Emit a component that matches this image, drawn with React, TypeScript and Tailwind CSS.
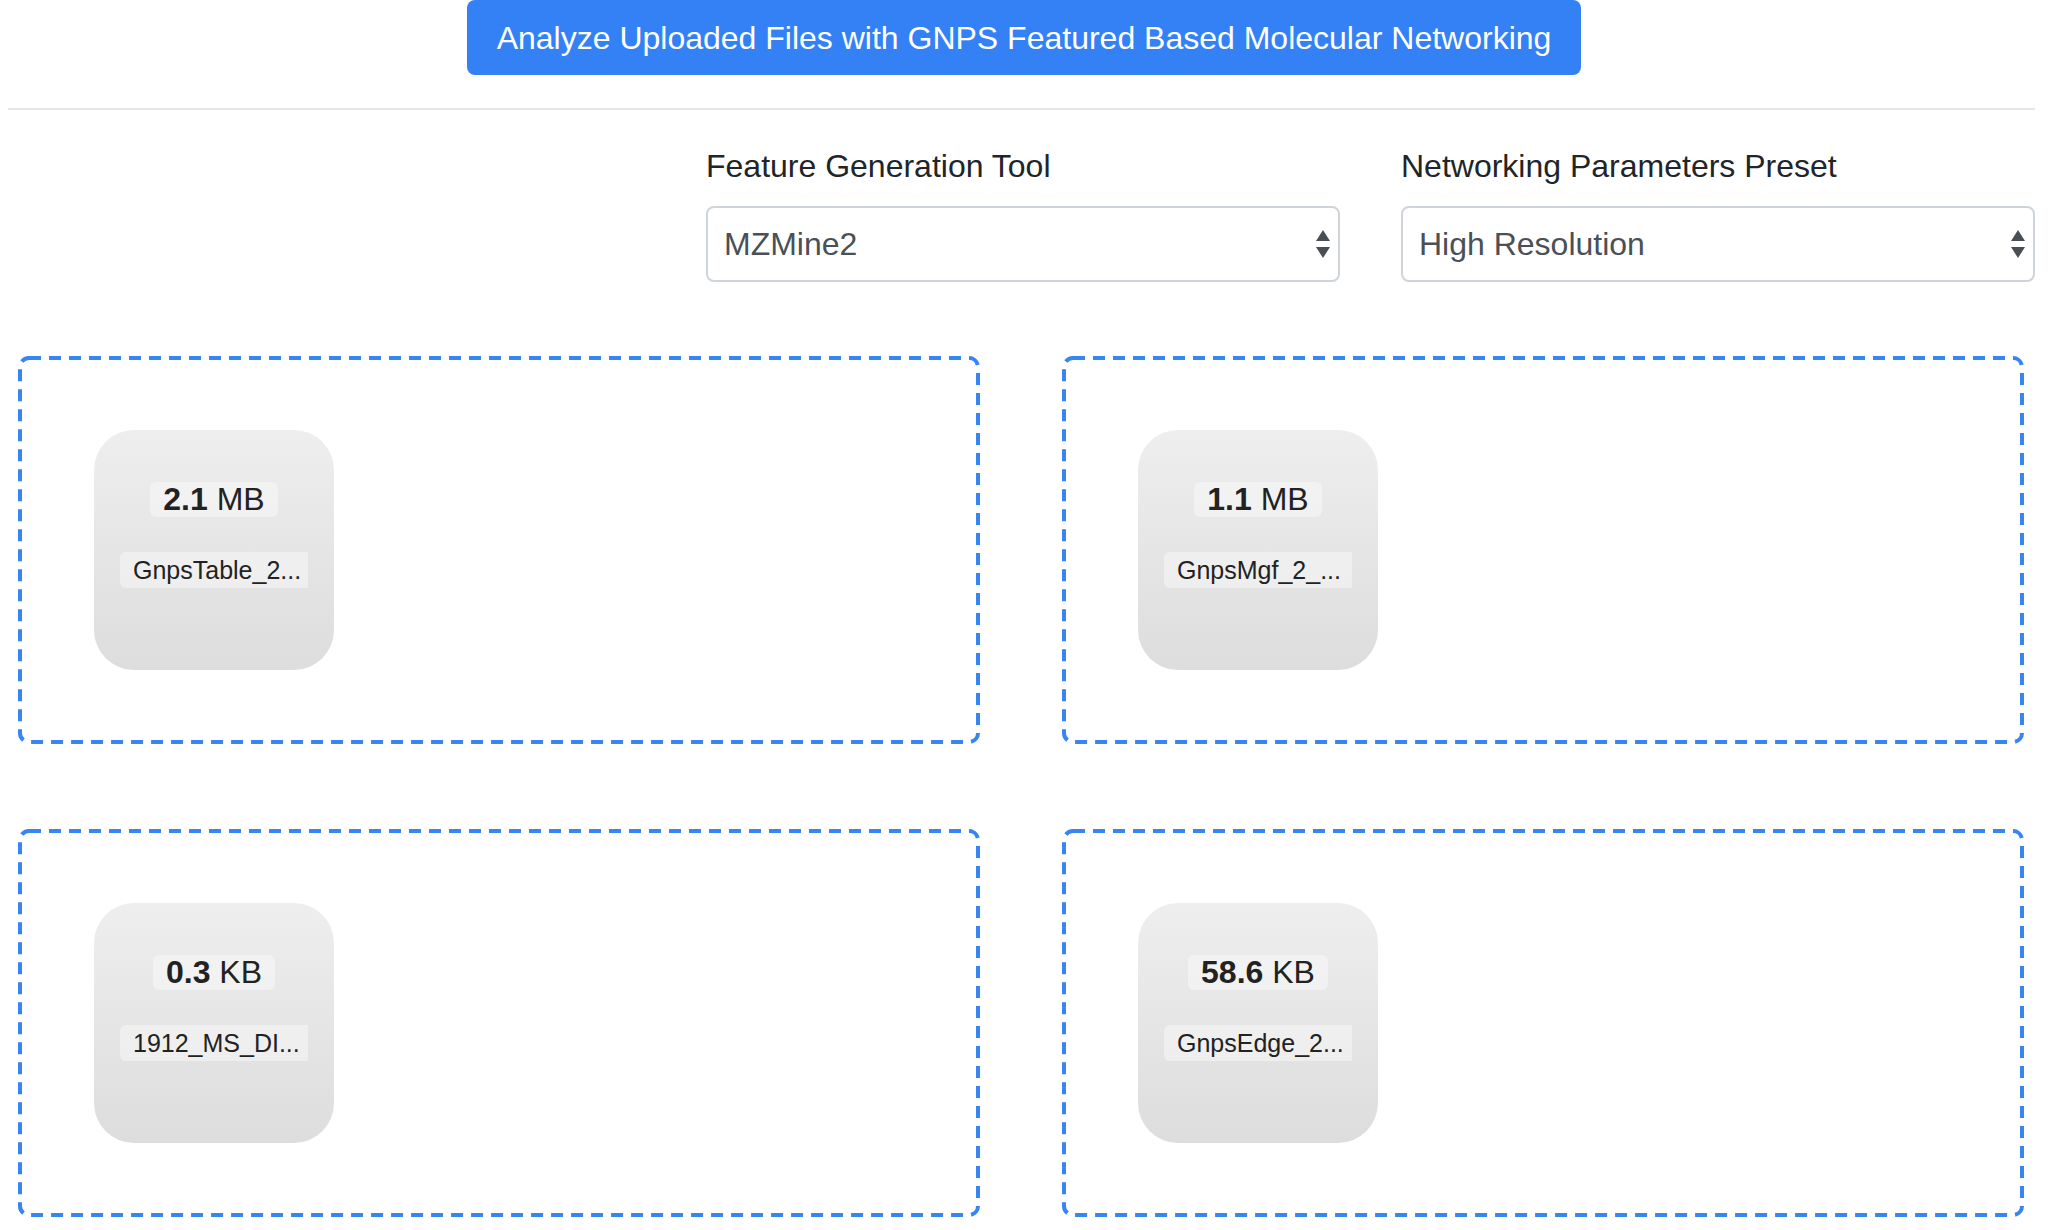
import React from "react";

type FileItem = { size: string; unit: string; name: string };

const files: FileItem[] = [
  { size: "2.1", unit: "MB", name: "GnpsTable_2..." },
  { size: "1.1", unit: "MB", name: "GnpsMgf_2_..." },
  { size: "0.3", unit: "KB", name: "1912_MS_DI..." },
  { size: "58.6", unit: "KB", name: "GnpsEdge_2..." },
];

const SelectArrows: React.FC = () => (
  <svg width="16" height="32" viewBox="0 0 16 32" className="shrink-0">
    <polygon points="1,13 8,2 15,13" fill="#4a4f55" />
    <polygon points="1,19 15,19 8,30" fill="#4a4f55" />
  </svg>
);

const SelectField: React.FC<{ label: string; value: string }> = ({ label, value }) => (
  <div className="w-[634px]">
    <div className="text-[32px] leading-[48px] text-[#212529] mb-[16px]">{label}</div>
    <div className="h-[76px] border-2 border-[#ced4da] rounded-[8px] bg-white flex items-center justify-between pl-[16px] pr-[7px]">
      <span className="text-[32px] text-[#495057]">{value}</span>
      <SelectArrows />
    </div>
  </div>
);

// dashed outline drawn as svg so the dash length matches (12 on / 8 off)
const DashedFrame: React.FC = () => (
  <svg width="962" height="388" className="absolute inset-0 pointer-events-none">
    <rect
      x="2"
      y="2"
      width="958"
      height="384"
      rx="9"
      fill="none"
      stroke="#3784f3"
      strokeWidth="4"
      strokeDasharray="12 8"
    />
  </svg>
);

const FileTile: React.FC<{ file: FileItem }> = ({ file }) => (
  <div className="w-[240px] h-[240px] rounded-[40px] bg-linear-to-b from-[#eeeeee] to-[#dddddd] px-[26px] pt-[52px] flex flex-col items-center">
    {/* size */}
    <div className="h-[35px] px-[13px] rounded-[6px] bg-white/40 text-[32px] leading-[35px] text-[#222222] whitespace-nowrap">
      <span className="font-bold">{file.size}</span> {file.unit}
    </div>
    {/* filename */}
    <div className="mt-[35px] w-full h-[36px] rounded-l-[6px] bg-white/40 text-[25px] leading-[36px] text-[#222222] pl-[13px] whitespace-nowrap overflow-hidden text-ellipsis">
      {file.name}
    </div>
  </div>
);

export default function App() {
  return (
    <div className="min-h-screen bg-white font-['Liberation_Sans',Arial,sans-serif]">
      {/* Analyze button */}
      <div className="flex justify-center">
        <button className="w-[1114px] h-[75px] bg-[#3481f5] text-white text-[32px] rounded-[8px]">
          Analyze Uploaded Files with GNPS Featured Based Molecular Networking
        </button>
      </div>

      <div className="mt-[33px] ml-[8px] mr-[13px] h-[2px] bg-[#e5e5e5]" />

      {/* Parameters */}
      <div className="pt-[32px] pr-[13px] flex justify-end gap-[61px]">
        <SelectField label="Feature Generation Tool" value="MZMine2" />
        <SelectField label="Networking Parameters Preset" value="High Resolution" />
      </div>

      {/* Dropzones */}
      <div className="mt-[74px] pl-[18px] pr-[24px] grid grid-cols-2 gap-x-[82px] gap-y-[85px]">
        {files.map((f) => (
          <div key={f.name} className="relative h-[388px] rounded-[8px] pl-[76px] pt-[74px]">
            <DashedFrame />
            <FileTile file={f} />
          </div>
        ))}
      </div>
    </div>
  );
}
